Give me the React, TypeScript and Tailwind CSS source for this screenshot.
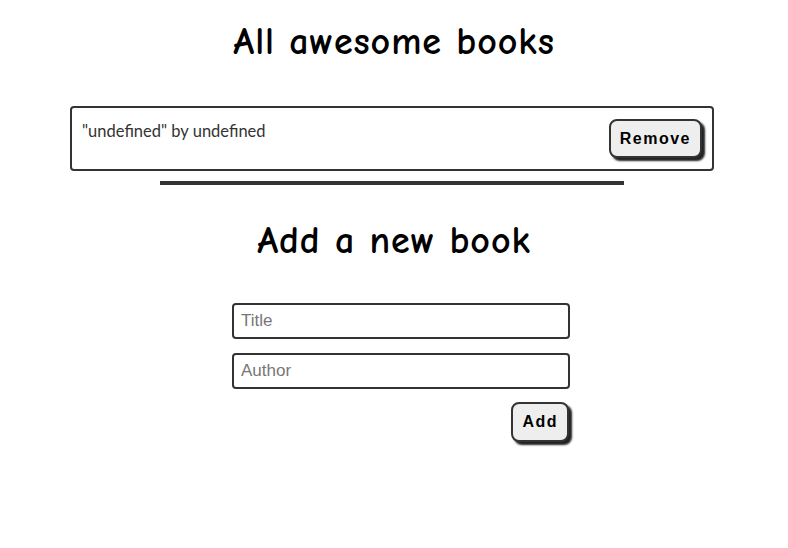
import React from "react";

const heading = { fontFamily: '"Comic Sans MS", "Comic Neue", "DejaVu Sans", sans-serif' };

export default function App() {
  return (
    <div className="min-h-[548px] w-[788px] bg-white" style={{ fontFamily: '"Liberation Sans", Arial, sans-serif' }}>
      <div className="flex flex-col items-center pt-[20px]">
        <h1 className="text-[38px] font-bold leading-[44px] tracking-[0.9px] text-black" style={heading}>All awesome books</h1>
      </div>
      <div className="ml-[70px] mt-[42px] flex h-[65px] w-[644px] items-start justify-between rounded-[4px] border-2 border-[#333] pl-[10px] pr-[10px] pt-[11px]">
        <p className="text-[16.5px] text-[#333]" style={{ fontFamily: 'Lato, sans-serif' }}>"undefined" by undefined</p>
        <button className="mt-[0px] h-[39px] rounded-[8px] border-2 border-[#333] bg-[#eee] px-[9px] text-[16px] font-bold tracking-[1.5px] text-black shadow-[3px_3px_2px_#222]">Remove</button>
      </div>
      <div className="ml-[160px] mt-[10px] h-[4px] w-[464px] bg-[#333]" />
      <div className="flex flex-col items-center pt-[34px]">
        <h2 className="text-[38px] font-bold leading-[44px] tracking-[0.9px] text-black" style={heading}>Add a new book</h2>
      </div>
      <div className="ml-[232px] mt-[40px] flex w-[338px] flex-col">
        <input placeholder="Title" className="h-[36px] w-[338px] rounded-[4px] border-2 border-[#333] px-[7px] text-[17px] placeholder:text-[#777] outline-none" />
        <input placeholder="Author" className="mt-[14px] h-[36px] w-[338px] rounded-[4px] border-2 border-[#333] px-[7px] text-[17px] placeholder:text-[#777] outline-none" />
        <div className="mt-[13px] flex justify-end">
          <button className="mr-[1px] h-[40px] rounded-[8px] border-2 border-[#333] bg-[#eee] px-[9px] text-[16px] font-bold tracking-[1.5px] text-black shadow-[3px_3px_2px_#222]">Add</button>
        </div>
      </div>
    </div>
  );
}
